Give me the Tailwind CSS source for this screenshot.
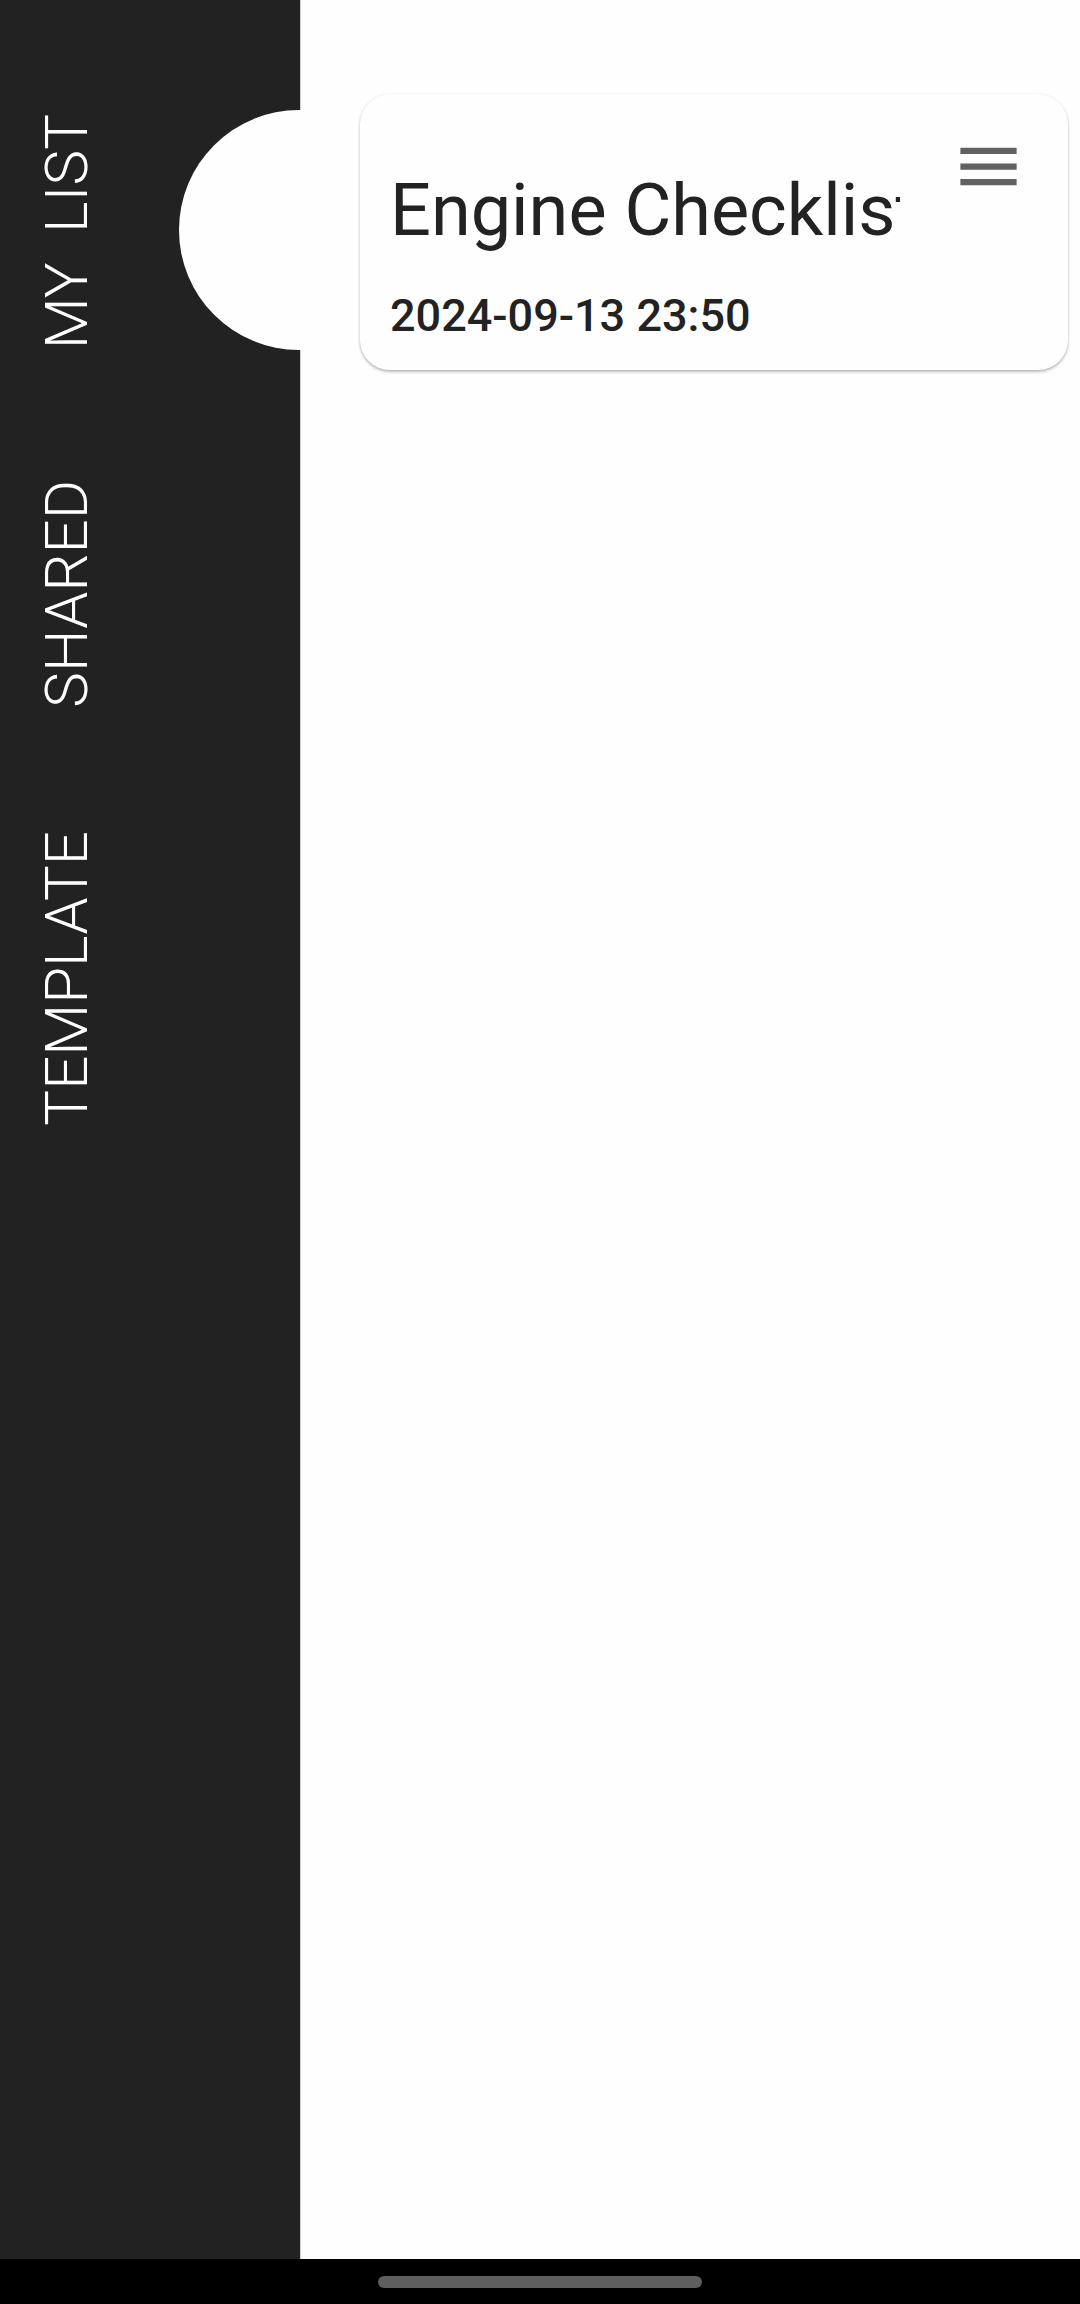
<!DOCTYPE html>
<html lang="en">
<head>
<meta charset="utf-8">
<meta name="viewport" content="width=device-width, initial-scale=1">
<title>My List</title>
<script src="https://cdn.jsdelivr.net/npm/@tailwindcss/browser@4"></script>
</head>
<body class="flex min-h-screen flex-col bg-[#fefefe] font-['Roboto',sans-serif] text-[#222222]">
  <div class="flex flex-1">
    <nav class="relative w-[301px] shrink-0 border-r border-[#cfd0cb] bg-[#222222] pt-[114px] pl-[37px] text-white">
      <!-- Notch marking the selected tab -->
      <span class="absolute top-[110px] left-[179px] h-60 w-[122px] rounded-l-full bg-[#fefefe]"></span>
      <ul class="flex flex-col items-start gap-[123px] text-[60px] leading-[60px] font-light">
        <li class="flex pb-2"><a href="#my-list" class="rotate-180 whitespace-pre [writing-mode:vertical-rl]" aria-current="page">MY  LIST</a></li>
        <li class="flex"><a href="#shared" class="rotate-180 [writing-mode:vertical-rl]">SHARED</a></li>
        <li class="flex"><a href="#template" class="rotate-180 [writing-mode:vertical-rl]">TEMPLATE</a></li>
      </ul>
    </nav>
    <main class="min-w-0 flex-1 pt-[94px] pr-3 pl-[59px]">
      <article class="flex items-start rounded-[30px] bg-[#fefefe] pb-[26px] pl-[30px] shadow-[0_2px_3px_rgba(0,0,0,0.26),0_0_2px_rgba(0,0,0,0.08)]">
        <div class="min-w-0 flex-1 pt-[75px]">
          <h2 class="overflow-hidden text-[72px] leading-[84px] whitespace-nowrap">Engine Checklist</h2>
          <p class="mt-[35px] text-[45px] leading-[56px] font-medium">2024-09-13 23:50</p>
        </div>
        <button type="button" aria-label="Menu" class="flex w-[168px] shrink-0 pt-[35px] pl-[51px]">
          <svg viewBox="0 0 24 24" class="size-[75px] fill-[#616161]" aria-hidden="true"><path d="M3 18h18v-2H3v2zm0-5h18v-2H3v2zm0-7v2h18V6H3z"/></svg>
        </button>
      </article>
    </main>
  </div>
  <footer class="flex h-[45px] items-center justify-center bg-black">
    <span class="h-3 w-[30%] rounded-full bg-[#5e5e5e]"></span>
  </footer>
</body>
</html>
